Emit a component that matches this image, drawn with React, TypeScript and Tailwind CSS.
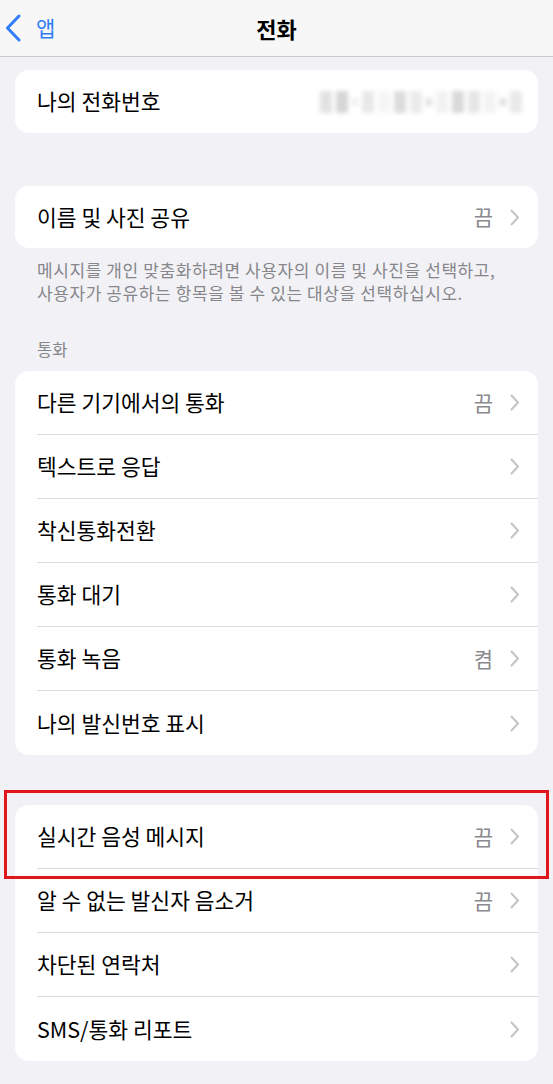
type Row = { label: string; value?: string };

const CALL_ROWS: Row[] = [
  { label: "다른 기기에서의 통화", value: "끔" },
  { label: "텍스트로 응답" },
  { label: "착신통화전환" },
  { label: "통화 대기" },
  { label: "통화 녹음", value: "켬" },
  { label: "나의 발신번호 표시" },
];

const MORE_ROWS: Row[] = [
  { label: "실시간 음성 메시지", value: "끔" },
  { label: "알 수 없는 발신자 음소거", value: "끔" },
  { label: "차단된 연락처" },
  { label: "SMS/통화 리포트" },
];

// blurred number placeholder
const BLUR = ["#e2e2e2", "#d6d6d6", "#efefef", "#e8e8e8", "#f5f5f5", "#dcdcdc", "#ebebeb", "#e0e0e0", "#f2f2f2", "#d9d9d9", "#e6e6e6", "#f3f3f3", "#dedede", "#e9e9e9"];

function Chevron() {
  return (
    <svg width="10" height="17" viewBox="0 0 10 17" className="ml-[17px]">
      <path d="M1.5 1.5 L8 8.5 L1.5 15.5" fill="none" stroke="#c4c4c7" strokeWidth="2" strokeLinecap="round" strokeLinejoin="round" />
    </svg>
  );
}

function SettingsRow({ row, last }: { row: Row; last: boolean }) {
  return (
    <div className="flex h-16 items-stretch pl-[22px]">
      <div className={`flex flex-1 items-center pr-[18px] ${last ? "" : "border-b border-[#dcdcde]"}`}>
        <span className="flex-1 text-[21.5px] text-black">{row.label}</span>
        {row.value && <span className="text-[21px] text-[#8a8a8e]">{row.value}</span>}
        <Chevron />
      </div>
    </div>
  );
}

function Card({ rows }: { rows: Row[] }) {
  return (
    <div className="mx-[15px] overflow-hidden rounded-[14px] bg-white">
      {rows.map((r, i) => (
        <SettingsRow key={r.label} row={r} last={i === rows.length - 1} />
      ))}
    </div>
  );
}

export default function App() {
  return (
    <div
      className="relative min-h-[1084px] w-[553px] bg-[#f2f2f6]"
      style={{ fontFamily: '"Noto Sans CJK KR", "Noto Sans", sans-serif' }}
    >
      {/* Nav bar */}
      <header className="relative flex h-[57px] items-center border-b border-[#c9c9cc] bg-[#f7f7f7]">
        <div className="flex items-center pl-[5px] text-[#2f7cf6]">
          <svg width="17" height="28" viewBox="0 0 17 28">
            <path d="M14 2 L2.5 14 L14 26" fill="none" stroke="#2f7cf6" strokeWidth="3" strokeLinecap="round" strokeLinejoin="round" />
          </svg>
          <span className="ml-[14px] text-[21px]">앱</span>
        </div>
        <h1 className="absolute left-1/2 -translate-x-1/2 text-[22px] font-bold text-black">전화</h1>
      </header>

      {/* My number */}
      <div className="mx-[15px] mt-[13px] flex h-[63px] items-center rounded-[14px] bg-white pl-[22px] pr-[16px]">
        <span className="flex-1 text-[21.5px] text-black">나의 전화번호</span>
        <div className="flex h-[24px] items-center gap-[4px] blur-[2px]">
          {BLUR.map((c, i) => (
            <div key={i} className={i % 5 === 2 ? "h-[8px] w-[6px]" : "h-[22px] w-[12px]"} style={{ backgroundColor: c }} />
          ))}
        </div>
      </div>

      {/* Name & photo */}
      <div className="mx-[15px] mt-[53px] flex h-[62px] items-center rounded-[14px] bg-white pl-[22px] pr-[18px]">
        <span className="flex-1 text-[21.5px] text-black">이름 및 사진 공유</span>
        <span className="text-[21px] text-[#8a8a8e]">끔</span>
        <Chevron />
      </div>
      <p className="mt-[10px] px-[37px] text-[17px] leading-[23px] tracking-[0.6px] text-[#86868b]">
        메시지를 개인 맞춤화하려면 사용자의 이름 및 사진을 선택하고,
        <br />
        사용자가 공유하는 항목을 볼 수 있는 대상을 선택하십시오.
      </p>

      {/* Calls */}
      <p className="mt-[34px] px-[37px] text-[16.5px] leading-[22px] text-[#86868b]">통화</p>
      <div className="mt-[11px]">
        <Card rows={CALL_ROWS} />
      </div>

      <div className="mt-[50px] pb-[22px]">
        <Card rows={MORE_ROWS} />
      </div>

      {/* highlight box */}
      <div className="pointer-events-none absolute left-[4px] top-[790px] h-[89px] w-[545px] border-[3px] border-[#e0161b]" />
    </div>
  );
}
